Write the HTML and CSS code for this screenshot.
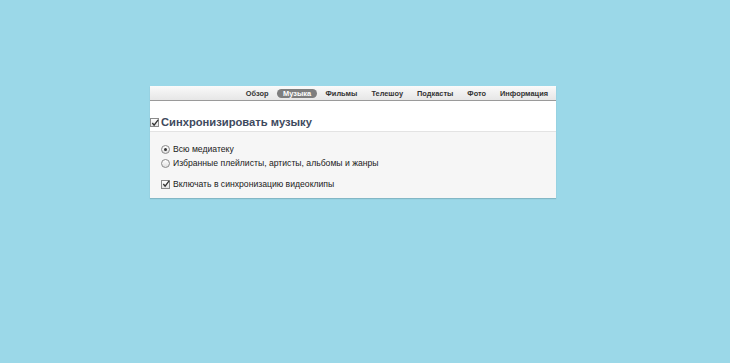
FILE: index.html
```html
<!DOCTYPE html>
<html>
<head>
<meta charset="utf-8">
<link rel="stylesheet" href="styles.css">
</head>
<body>
<div class="panel">
  <div class="tabs">
    <span class="tab">Обзор</span>
    <span class="tab active">Музыка</span>
    <span class="tab">Фильмы</span>
    <span class="tab">Телешоу</span>
    <span class="tab">Подкасты</span>
    <span class="tab">Фото</span>
    <span class="tab">Информация</span>
  </div>
  <div class="header">
    <span class="cb"><svg width="8" height="8" viewBox="0 0 9 9"><path d="M1.5 4.5 L3.5 7 L8 1" fill="none" stroke="#333" stroke-width="1.5"/></svg></span>
    <span class="title">Синхронизировать музыку</span>
  </div>
  <div class="body">
    <div class="row"><span class="radio on"></span><span>Всю медиатеку</span></div>
    <div class="row"><span class="radio"></span><span>Избранные плейлисты, артисты, альбомы и жанры</span></div>
    <div class="row gap"><span class="cb"><svg width="8" height="8" viewBox="0 0 9 9"><path d="M1.5 4.5 L3.5 7 L8 1" fill="none" stroke="#333" stroke-width="1.5"/></svg></span><span>Включать в синхронизацию видеоклипы</span></div>
  </div>
</div>
</body>
</html>
```
FILE: styles.css
```css
html, body { margin: 0; padding: 0; }
body {
  background: #9bd8e8;
  width: 730px;
  height: 363px;
  font-family: "Liberation Sans", Arial, sans-serif;
  padding-top: 86px;
  padding-left: 150px;
  box-sizing: border-box;
}
.panel {
  width: 406px;
  height: 112px;
  background: #f6f6f6;
  box-shadow: 0 1px 1px rgba(0,0,0,0.15);
  display: flex;
  flex-direction: column;
}
.tabs {
  height: 14px;
  background: linear-gradient(#fafafa, #e6e6e6);
  border-bottom: 1px solid #9a9a9a;
  display: flex;
  justify-content: flex-end;
  align-items: center;
  padding-right: 1px;
}
.tab {
  font-size: 7.4px;
  font-weight: bold;
  color: #333;
  padding: 0 7px;
  line-height: 9px;
}
.tab.active {
  background: #7e7e7e;
  color: #fff;
  border-radius: 5px;
  padding: 0 6px;
  margin: 0 1.5px;
}
.header {
  background: #fff;
  height: 31px;
  border-bottom: 1px solid #e3e3e3;
  display: flex;
  align-items: flex-end;
  gap: 2px;
  padding-bottom: 2px;
  box-sizing: border-box;
}
.header .cb { margin-bottom: 2px; }
.title {
  font-size: 11.2px;
  line-height: 13px;
  font-weight: bold;
  color: #3e4a5e;
}
.cb {
  width: 9px;
  height: 9px;
  box-sizing: border-box;
  border: 1px solid #8a8a8a;
  background: linear-gradient(#fff, #e4e4e4);
  display: inline-flex;
  align-items: center;
  justify-content: center;
  flex: none;
}
.cb svg { flex: none; }
.body {
  padding: 10px 0 0 11px;
  display: flex;
  flex-direction: column;
}
.row {
  display: flex;
  align-items: center;
  gap: 3px;
  font-size: 8.65px;
  color: #1a1a1a;
  height: 14px;
}
.row.gap { margin-top: 7px; }
.radio {
  width: 9px;
  height: 9px;
  box-sizing: border-box;
  border: 1px solid #8a8a8a;
  border-radius: 50%;
  background: linear-gradient(#fff, #e0e0e0);
  display: inline-flex;
  align-items: center;
  justify-content: center;
  flex: none;
}
.radio.on::after {
  content: "";
  width: 3px;
  height: 3px;
  border-radius: 50%;
  background: #333;
}
```
